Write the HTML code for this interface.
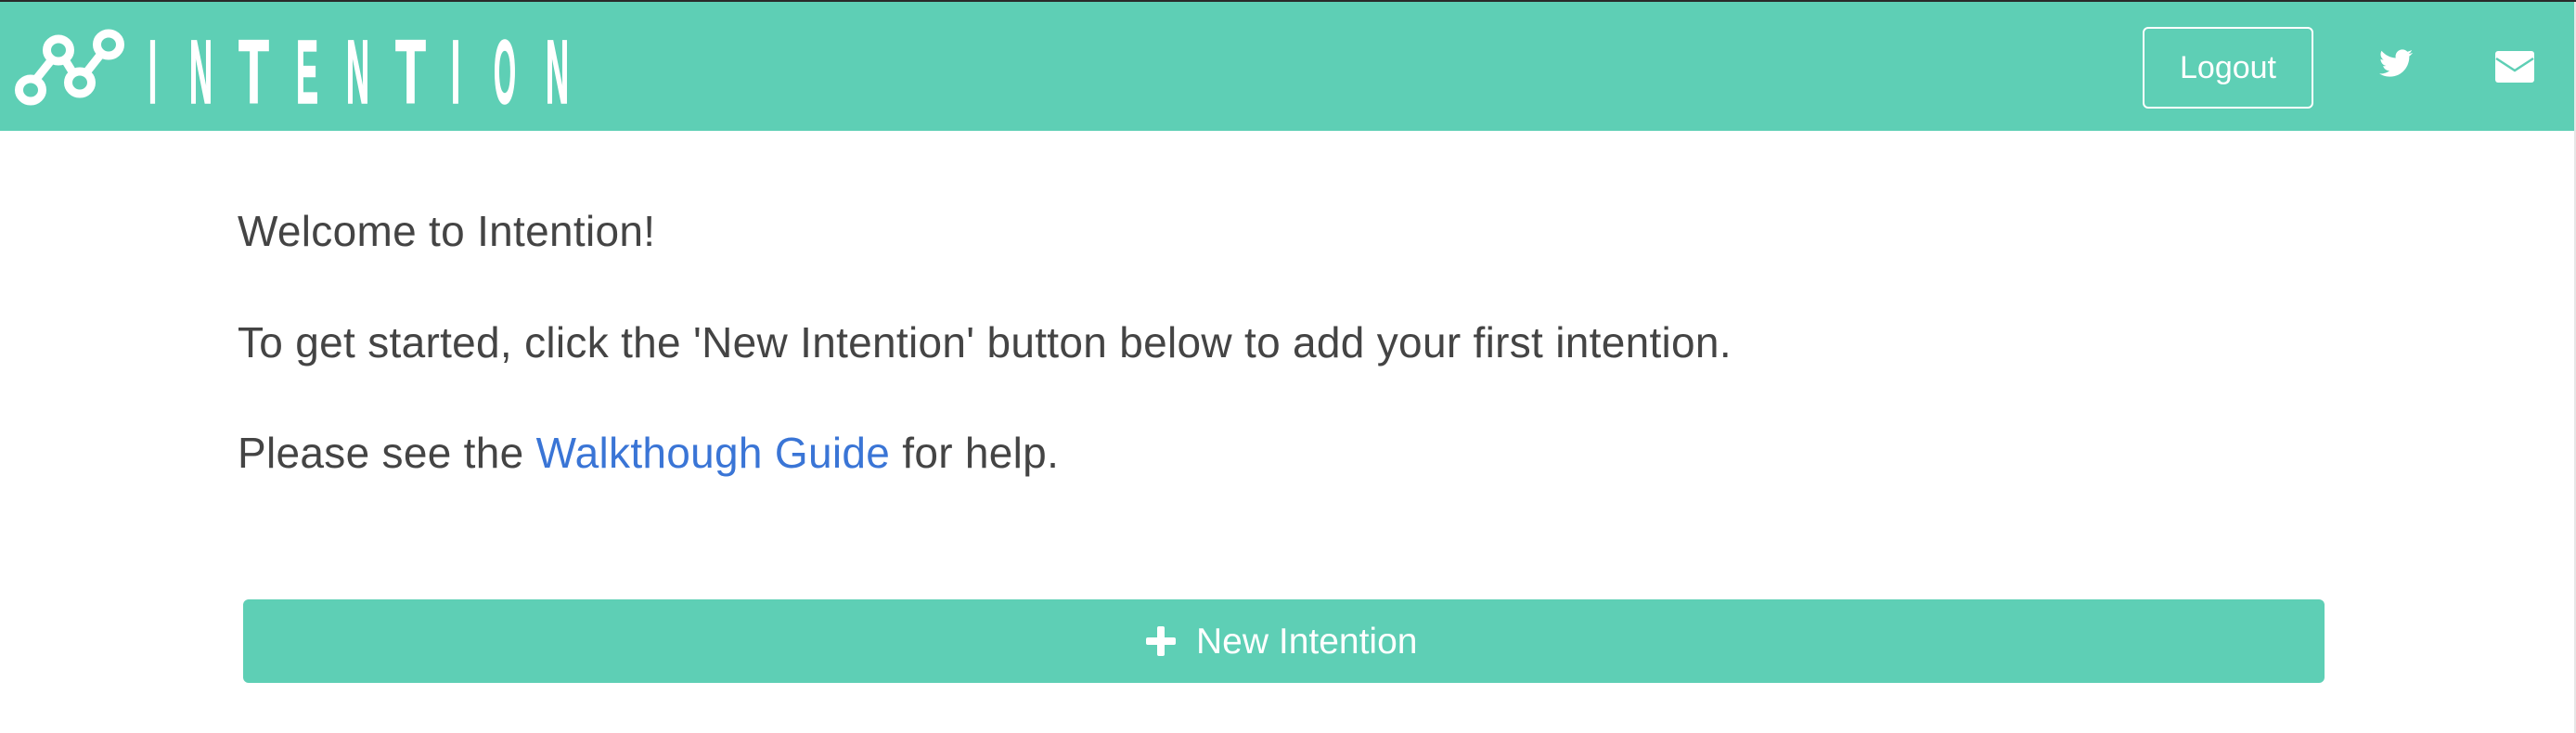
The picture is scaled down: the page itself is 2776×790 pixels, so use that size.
<!DOCTYPE html>
<html><head><meta charset="utf-8"><style>
html,body{margin:0;padding:0;width:2776px;height:790px;overflow:hidden;background:#fff;font-family:"Liberation Sans",sans-serif;}
.top{position:absolute;left:0;top:0;width:2776px;height:2px;background:#2a2a2a;}
.hdr{position:absolute;left:0;top:2px;width:2774px;height:139px;background:#5ecfb5;}
.sb{position:absolute;right:0;top:2px;width:2px;height:788px;background:#e6e6e6;}
.logout{position:absolute;left:2309px;top:29px;width:184px;height:88px;box-sizing:border-box;border:2px solid #fff;border-radius:6px;color:#fff;font-size:34px;line-height:84px;text-align:center;}
.p{position:absolute;left:256px;color:#444;font-size:46px;letter-spacing:0.3px;white-space:nowrap;line-height:1;}
.p a{color:#3a75d6;text-decoration:none;}
.btn{position:absolute;left:262px;top:646px;width:2243px;height:90px;background:#5ecfb5;border-radius:6px;}
.btn span{position:absolute;left:1027px;top:1px;line-height:90px;font-size:39px;color:#fff;white-space:nowrap;}
</style></head><body>
<div class="top"></div>
<div class="hdr"></div>
<div class="sb"></div>
<svg style="position:absolute;left:0;top:0" width="2776" height="141">
 <g stroke="#fff" stroke-width="9" fill="none">
  <line x1="40" y1="84" x2="56" y2="64"/>
  <line x1="71" y1="66" x2="79" y2="79"/>
  <line x1="94" y1="77" x2="109" y2="58"/>
  <ellipse cx="33" cy="97" rx="12.5" ry="12"/>
  <ellipse cx="63" cy="54" rx="12.5" ry="12"/>
  <ellipse cx="86" cy="89" rx="12.5" ry="12"/>
  <ellipse cx="117" cy="48" rx="12.5" ry="12"/>
 </g>
 <g fill="#fff" stroke="#fff" stroke-width="1.5" font-family="Liberation Sans, sans-serif" font-weight="bold" font-size="97">
  <text x="160" y="111" textLength="9" lengthAdjust="spacingAndGlyphs">I</text>
  <text x="204" y="111" textLength="25" lengthAdjust="spacingAndGlyphs">N</text>
  <text x="257" y="111" textLength="33" lengthAdjust="spacingAndGlyphs">T</text>
  <text x="319" y="111" textLength="24" lengthAdjust="spacingAndGlyphs">E</text>
  <text x="373" y="111" textLength="25" lengthAdjust="spacingAndGlyphs">N</text>
  <text x="426" y="111" textLength="33" lengthAdjust="spacingAndGlyphs">T</text>
  <text x="486" y="111" textLength="10" lengthAdjust="spacingAndGlyphs">I</text>
  <text x="532" y="111" textLength="24" lengthAdjust="spacingAndGlyphs">O</text>
  <text x="588" y="111" textLength="25" lengthAdjust="spacingAndGlyphs">N</text>
 </g>
 <g transform="translate(2564,50) scale(0.0703)">
  <path fill="#fff" d="M459.37 151.716c.325 4.548.325 9.097.325 13.645 0 138.72-105.583 298.558-298.558 298.558-59.452 0-114.68-17.219-161.137-47.106 8.447.974 16.568 1.299 25.34 1.299 49.055 0 94.213-16.568 130.274-44.832-46.132-.975-84.792-31.188-98.112-72.772 6.498.974 12.995 1.624 19.818 1.624 9.421 0 18.843-1.3 27.614-3.573-48.081-9.747-84.143-51.980-84.143-102.985v-1.299c13.969 7.797 30.214 12.670 47.431 13.319-28.264-18.843-46.781-51.005-46.781-87.391 0-19.492 5.197-37.360 14.294-52.954 51.655 63.675 129.3 105.258 216.365 109.807-1.624-7.797-2.599-15.918-2.599-24.040 0-57.828 46.782-104.934 104.934-104.934 30.213 0 57.502 12.670 76.670 33.137 23.715-4.548 46.456-13.320 66.599-25.340-7.798 24.366-24.366 44.833-46.132 57.827 21.117-2.273 41.584-8.122 60.426-16.243-14.292 20.791-32.161 39.308-52.628 54.253z"/>
 </g>
 <rect x="2689" y="55" width="42" height="34" rx="3" fill="#fff"/>
 <polyline points="2690,63 2710,76 2730,63" fill="none" stroke="#5ecfb5" stroke-width="2.5"/>
</svg>
<div class="logout">Logout</div>
<div class="p" style="top:226px">Welcome to Intention!</div>
<div class="p" style="top:346px">To get started, click the 'New Intention' button below to add your first intention.</div>
<div class="p" style="top:465px">Please see the <a>Walkthough Guide</a> for help.</div>
<div class="btn">
 <svg style="position:absolute;left:973px;top:29px" width="32" height="32"><rect x="12" y="0" width="8" height="32" rx="2" fill="#fff"/><rect x="0" y="12" width="32" height="8" rx="2" fill="#fff"/></svg>
 <span>New Intention</span>
</div>
</body></html>
